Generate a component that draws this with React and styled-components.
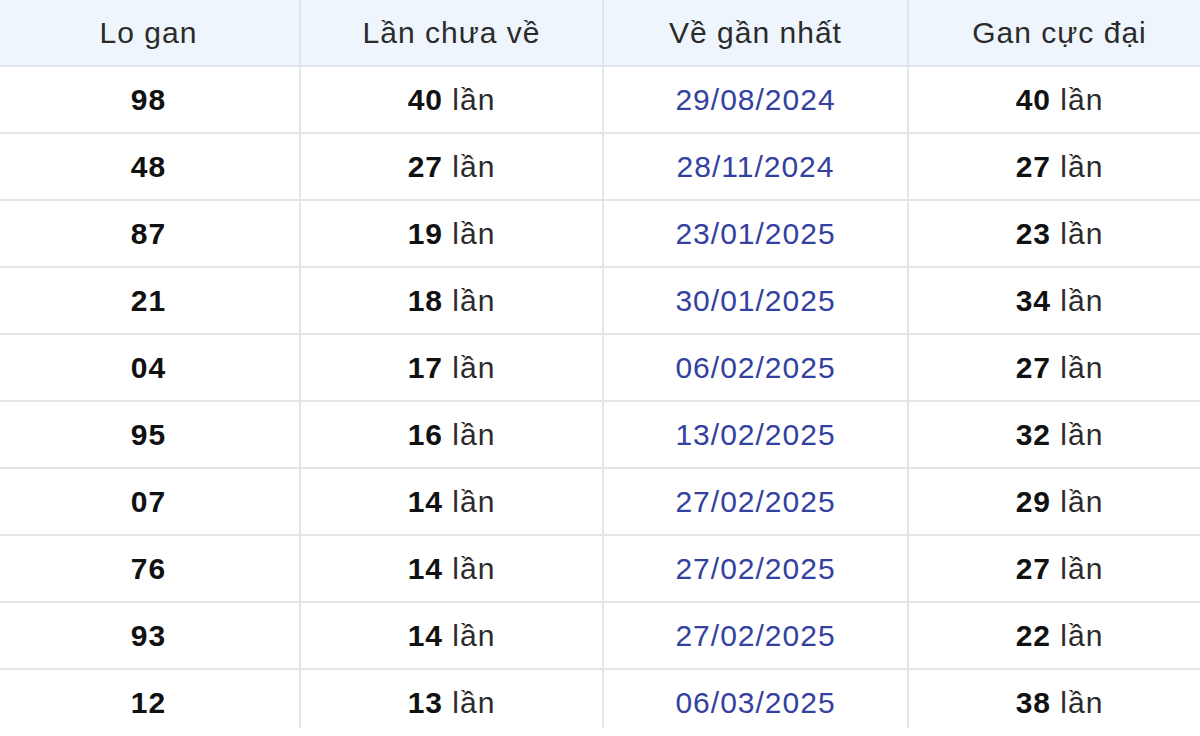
import React from 'react';
import styled, { createGlobalStyle } from 'styled-components';

const GlobalStyle = createGlobalStyle`
  html, body {
    margin: 0;
    padding: 0;
    background: #fff;
    overflow: hidden;
  }
  body {
    font-family: "Liberation Sans", Arial, sans-serif;
  }
`;

const rows = [
  { lo: '98', chua: 40, date: '29/08/2024', max: 40 },
  { lo: '48', chua: 27, date: '28/11/2024', max: 27 },
  { lo: '87', chua: 19, date: '23/01/2025', max: 23 },
  { lo: '21', chua: 18, date: '30/01/2025', max: 34 },
  { lo: '04', chua: 17, date: '06/02/2025', max: 27 },
  { lo: '95', chua: 16, date: '13/02/2025', max: 32 },
  { lo: '07', chua: 14, date: '27/02/2025', max: 29 },
  { lo: '76', chua: 14, date: '27/02/2025', max: 27 },
  { lo: '93', chua: 14, date: '27/02/2025', max: 22 },
  { lo: '12', chua: 13, date: '06/03/2025', max: 38 },
];

const Frame = styled.div`
  height: 728px;
  overflow: hidden;
`;

const Table = styled.table`
  width: 1216px;
  margin-left: -4px;
  border-collapse: collapse;
  table-layout: fixed;
  font-size: 30px;
  letter-spacing: 1px;
`;

const Th = styled.th`
  height: 65px;
  padding: 0;
  background: #eef5fc;
  color: #2b2b2b;
  font-weight: normal;
  text-align: center;
  border: 2px solid #e2e5ea;
  border-top: none;
`;

const Td = styled.td`
  height: 65px;
  padding: 0;
  text-align: center;
  color: ${p => (p.$date ? '#3341a0' : '#2b2b2b')};
  border: 2px solid #e2e5ea;
`;

const Num = styled.b`
  color: #111;
  font-weight: bold;
`;

const Count = ({ n }) => (
  <>
    <Num>{n}</Num> lần
  </>
);

export default function App() {
  return (
    <>
      <GlobalStyle />
      <Frame>
        <Table>
          <colgroup>
            <col style={{ width: '303px' }} />
            <col style={{ width: '303px' }} />
            <col style={{ width: '305px' }} />
            <col />
          </colgroup>
          <thead>
            <tr>
              <Th>Lo gan</Th>
              <Th>Lần chưa về</Th>
              <Th>Về gần nhất</Th>
              <Th>Gan cực đại</Th>
            </tr>
          </thead>
          <tbody>
            {rows.map((r, i) => (
              <tr key={i}>
                <Td><Num>{r.lo}</Num></Td>
                <Td><Count n={r.chua} /></Td>
                <Td $date>{r.date}</Td>
                <Td><Count n={r.max} /></Td>
              </tr>
            ))}
          </tbody>
        </Table>
      </Frame>
    </>
  );
}
